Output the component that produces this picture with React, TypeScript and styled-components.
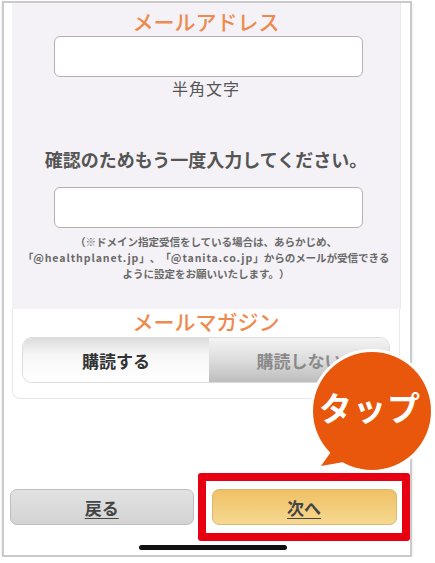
import styled, { createGlobalStyle } from "styled-components";

const GlobalStyle = createGlobalStyle`
  * { box-sizing: border-box; }
  body {
    margin: 0;
    background: #fff;
    font-family: "Noto Sans CJK JP", "Noto Sans", sans-serif;
  }
`;

const Frame = styled.div`
  position: relative;
  margin: 1px 0 0 2px;
  width: 410px;
  height: 556px;
  border: 2px solid #cacaca;
  background: #fff;
  box-shadow: 0 2px 3px rgba(0, 0, 0, 0.12);
  display: flex;
  flex-direction: column;
`;

const Panel = styled.section`
  margin-left: 8px;
  width: 389px;
  padding: 6px 0 27px;
  background: #f4f2f6;
  border-right: 1px solid #ebe9ed;
  display: flex;
  flex-direction: column;
`;

const Heading = styled.h2`
  margin: 0;
  font-size: 21px;
  line-height: 24px;
  font-weight: 500;
  color: #ee8a4f;
  text-align: center;
`;

const TextInput = styled.input<{ $gap?: number }>`
  margin: ${(p) => p.$gap ?? 3}px 0 0 42px;
  width: 309px;
  height: 41px;
  border: 1.5px solid #b4b0b0;
  border-radius: 6px;
  background: #fff;
`;

const Hint = styled.p`
  margin: 1px 0 0;
  font-size: 16px;
  line-height: 20px;
  letter-spacing: 1px;
  color: #555;
  text-align: center;
`;

const Prompt = styled.p`
  margin: 48px 0 0;
  font-size: 18px;
  line-height: 26px;
  font-weight: 700;
  color: #555;
  text-align: center;
`;

const Note = styled.p`
  margin: 6px 0 0;
  font-size: 10.6px;
  line-height: 16px;
  font-weight: 700;
  color: #6a6a6a;
  text-align: center;
  letter-spacing: -0.1px;
  text-spacing-trim: space-all;
`;

const Domain = styled.span`
  letter-spacing: 0.9px;
`;

const Card = styled.section`
  margin-left: 8px;
  width: 388px;
  padding: 0 9px 15px;
  background: #fff;
  border: 1px solid #e8e8e8;
  border-top: none;
  border-radius: 0 0 8px 8px;
  display: flex;
  flex-direction: column;
`;

const Segmented = styled.div`
  margin-top: 4px;
  height: 46px;
  display: grid;
  grid-template-columns: 186px 1fr;
  border: 1px solid #dcdcdc;
  border-radius: 10px;
  overflow: hidden;
`;

const Segment = styled.div<{ $active?: boolean }>`
  display: flex;
  align-items: center;
  justify-content: center;
  font-size: 17px;
  font-weight: 700;
  color: ${(p) => (p.$active ? "#333" : "#8a8a8a")};
  background: ${(p) =>
    p.$active
      ? "linear-gradient(#dcdcdc 0%, #f7f7f7 40%, #fff 100%)"
      : "linear-gradient(#f4f4f4 0%, #dadada 55%, #bdbdbd 100%)"};
`;

const Footer = styled.div`
  margin-top: auto;
  padding: 0 0 5px 6px;
  display: flex;
  flex-direction: column;
`;

const ButtonRow = styled.div`
  display: flex;
  align-items: center;
  gap: 4px;
`;

const Button = styled.button<{ $primary?: boolean }>`
  width: 185px;
  height: 36px;
  border-radius: 7px;
  border: 1px solid ${(p) => (p.$primary ? "#d8b777" : "#bdbdbd")};
  background: ${(p) =>
    p.$primary
      ? "linear-gradient(#efc165, #f6d890)"
      : "linear-gradient(#e2e2e2, #d3d3d3)"};
  font-family: inherit;
  font-size: 17px;
  font-weight: 700;
  color: #444;
  text-decoration: underline;
  text-underline-offset: 3px;
  padding: 0;
`;

const Highlight = styled.div`
  width: 214px;
  height: 68px;
  border: 8px solid #e60012;
  border-radius: 3px;
  padding: 0 0 0 6px;
  display: flex;
  align-items: center;
  background: #fff;
`;

const HomeBar = styled.div`
  margin: 4px 0 0 129px;
  width: 148px;
  height: 5px;
  border-radius: 3px;
  background: #111;
`;

const Bubble = styled.div`
  position: absolute;
  left: 299px;
  top: 340px;
  width: 134px;
  height: 134px;
`;

const BubbleLabel = styled.span`
  position: absolute;
  left: 0;
  right: 0;
  top: 44px;
  text-align: center;
  font-size: 33px;
  line-height: 40px;
  font-weight: 700;
  color: #fff;
  letter-spacing: 1px;
`;

const BubbleShape = () => (
  <svg width="134" height="134" viewBox="0 0 134 134">
    <g stroke="#fff" strokeWidth="6" strokeLinejoin="round">
      <circle cx="69" cy="68" r="59" fill="#fff" />
      <path d="M30 108 L18 123 L50 119 Z" fill="#fff" />
    </g>
    <circle cx="69" cy="68" r="59" fill="#e8570b" />
    <path d="M30 106 L18 123 L52 117 Z" fill="#e8570b" />
  </svg>
);

export default function App() {
  return (
    <>
      <GlobalStyle />
      <Frame>
        <Panel>
          <Heading>メールアドレス</Heading>
          <TextInput type="email" />
          <Hint>半角文字</Hint>
          <Prompt>確認のためもう一度入力してください。</Prompt>
          <TextInput type="email" $gap={15} />
          <Note>
            （※ドメイン指定受信をしている場合は、あらかじめ、
            <br />
            「<Domain>@healthplanet.jp</Domain>」、「<Domain>@tanita.co.jp</Domain>」からのメールが受信できる
            <br />
            ように設定をお願いいたします。）
          </Note>
        </Panel>
        <Card>
          <Heading>メールマガジン</Heading>
          <Segmented>
            <Segment $active>購読する</Segment>
            <Segment>購読しない</Segment>
          </Segmented>
        </Card>
        <Footer>
          <ButtonRow>
            <Button>戻る</Button>
            <Highlight>
              <Button $primary>次へ</Button>
            </Highlight>
          </ButtonRow>
          <HomeBar />
        </Footer>
        <Bubble>
          <BubbleShape />
          <BubbleLabel>タップ</BubbleLabel>
        </Bubble>
      </Frame>
    </>
  );
}
